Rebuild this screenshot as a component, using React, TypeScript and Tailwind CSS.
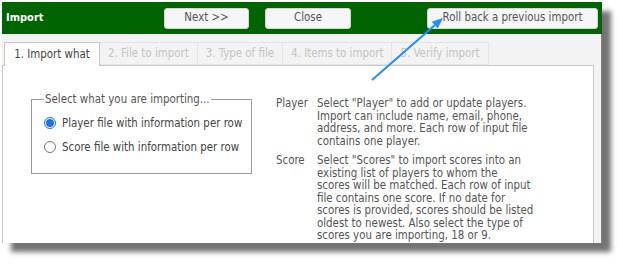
import React from 'react';

const tabs = ['1. Import what', '2. File to import', '3. Type of file', '4. Items to import', '5. Verify import'];

const playerLines = [
  'Select "Player" to add or update players.',
  'Import can include name, email, phone,',
  'address, and more. Each row of input file',
  'contains one player.',
];

const scoreLines = [
  'Select "Scores" to import scores into an',
  'existing list of players to whom the',
  'scores will be matched. Each row of input',
  'file contains one score. If no date for',
  'scores is provided, scores should be listed',
  'oldest to newest. Also select the type of',
  'scores you are importing, 18 or 9.',
];

function Radio({ checked, label }: { checked: boolean; label: string }) {
  return (
    <div className="flex items-center gap-[6px] whitespace-nowrap">
      <span
        className={
          checked
            ? 'flex h-[12px] w-[12px] shrink-0 items-center justify-center rounded-full border border-[#1a73e8] bg-white'
            : 'flex h-[12px] w-[12px] shrink-0 items-center justify-center rounded-full border border-[#767676] bg-white'
        }
      >
        {checked && <span className="h-[8px] w-[8px] rounded-full bg-[#1a73e8]" />}
      </span>
      <span>{label}</span>
    </div>
  );
}

function Help({ label, lines }: { label: string; lines: string[] }) {
  return (
    <div className="flex">
      <span className="w-[41px] shrink-0">{label}</span>
      <div className="flex flex-col whitespace-nowrap">
        {lines.map((l) => (
          <span key={l}>{l}</span>
        ))}
      </div>
    </div>
  );
}

export default function App() {
  return (
    <div
      className="relative h-[265px] w-[623px] overflow-hidden bg-white pl-[2px] pt-[2px] text-[11.4px]"
      style={{ fontFamily: '"DejaVu Sans Condensed", "DejaVu Sans", sans-serif' }}
    >
      <div className="flex h-[241px] w-[600px] flex-col shadow-[9px_9px_5px_rgba(0,0,0,0.55)]">
        <div className="flex h-[32px] shrink-0 items-center bg-[#006400] pl-[4px]">
          <span className="w-[158px] text-[11px] font-bold text-white">Import</span>
          <button className="h-[21px] w-[85px] rounded-[3px] border border-[#d5d5d5] bg-[#f5f5f5] text-[#555]">Next &gt;&gt;</button>
          <button className="ml-[16px] h-[21px] w-[86px] rounded-[3px] border border-[#d5d5d5] bg-[#f5f5f5] text-[#555]">Close</button>
          <button className="ml-[76px] h-[21px] w-[171px] rounded-[3px] border border-[#d5d5d5] bg-[#f5f5f5] text-[#555]">Roll back a previous import</button>
        </div>
        <div className="flex min-h-0 flex-1 flex-col overflow-hidden border-r border-[#8a7f78] bg-[#f3f3f3] pr-[7px] pt-[8px]">
          <div className="flex h-[23px] shrink-0 pl-[2px]">
            {tabs.map((t, i) => (
              <div
                key={t}
                className={
                  i === 0
                    ? 'relative z-10 -mb-px flex w-[96px] items-center justify-center border border-b-0 border-[#c8c8c8] bg-white text-[#444]'
                    : 'flex items-center border border-l-0 border-[#e4e4e4] px-[8px] text-[#c4c4c4]'
                }
              >
                {t}
              </div>
            ))}
          </div>
          <div className="flex flex-1 items-start border-l border-r border-t border-[#c8c8c8] bg-white pl-[28px] pt-[26px]">
            <fieldset className="h-[82px] w-[221px] shrink-0 border border-[#999] pl-[12px] pr-0 leading-[14px] text-[#444]">
              <legend className="px-[1px] text-[#555]">Select what you are importing...</legend>
              <div className="flex flex-col gap-[10px] pt-[10px]">
                <Radio checked label="Player file with information per row" />
                <Radio checked={false} label="Score file with information per row" />
              </div>
            </fieldset>
            <div className="ml-[24px] flex flex-col gap-[7px] pt-[5px] leading-[12.5px] text-[#555]">
              <Help label="Player" lines={playerLines} />
              <Help label="Score" lines={scoreLines} />
            </div>
          </div>
        </div>
      </div>
      <svg className="pointer-events-none absolute left-0 top-0" width="623" height="265">
        <line x1="372" y1="80" x2="435" y2="25" stroke="#1e8fff" strokeWidth="2" />
        <polygon points="443,18 437.7,28.6 431.7,21.8" fill="#1e8fff" />
      </svg>
    </div>
  );
}
